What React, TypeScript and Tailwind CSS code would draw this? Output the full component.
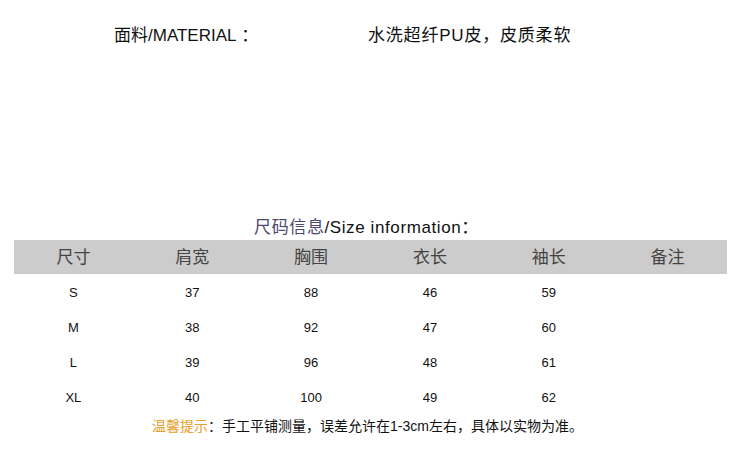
import React from 'react';

const headers = ['尺寸', '肩宽', '胸围', '衣长', '袖长', '备注'];

const rows = [
  ['S', '37', '88', '46', '59', ''],
  ['M', '38', '92', '47', '60', ''],
  ['L', '39', '96', '48', '61', ''],
  ['XL', '40', '100', '49', '62', ''],
];

const sans = "font-['Liberation_Sans','Noto_Sans_CJK_SC',sans-serif]";

const App: React.FC = () => {
  return (
    <div className={`w-[741px] h-[460px] bg-white text-[#111] ${sans}`}>
      {/* material line */}
      <div className="flex pt-[24px] pl-[114px] text-[17px] leading-[24px]">
        <span className="w-[254px]">面料/MATERIAL&nbsp;：</span>
        <span className="tracking-[0.8px]">水洗超纤PU皮，皮质柔软</span>
      </div>

      {/* size table */}
      <div className="mt-[169px] mx-[14px]">
        <div className="text-center text-[17px] leading-[22px] h-[23px] pr-[8px] tracking-[0.6px]">
          <span className="text-[#4d4870]">尺码信息</span>
          <span>/Size information：</span>
        </div>
        <div className="grid grid-cols-6 h-[34px] pt-[2px] items-center bg-[#cccccc] text-[#444] text-[17px] text-center">
          {headers.map((h) => (
            <div key={h}>{h}</div>
          ))}
        </div>
        {rows.map((r) => (
          <div key={r[0]} className="grid grid-cols-6 h-[35px] pt-[3px] items-center text-[13px] text-center">
            {r.map((c, i) => (
              <div key={i}>{c}</div>
            ))}
          </div>
        ))}
        <div className="text-center text-[14px] leading-[24px] pr-[6px]">
          <span className="text-[#e8a030]">温馨提示</span>
          <span>：手工平铺测量，误差允许在1-3cm左右，具体以实物为准。</span>
        </div>
      </div>
    </div>
  );
};

export default App;
